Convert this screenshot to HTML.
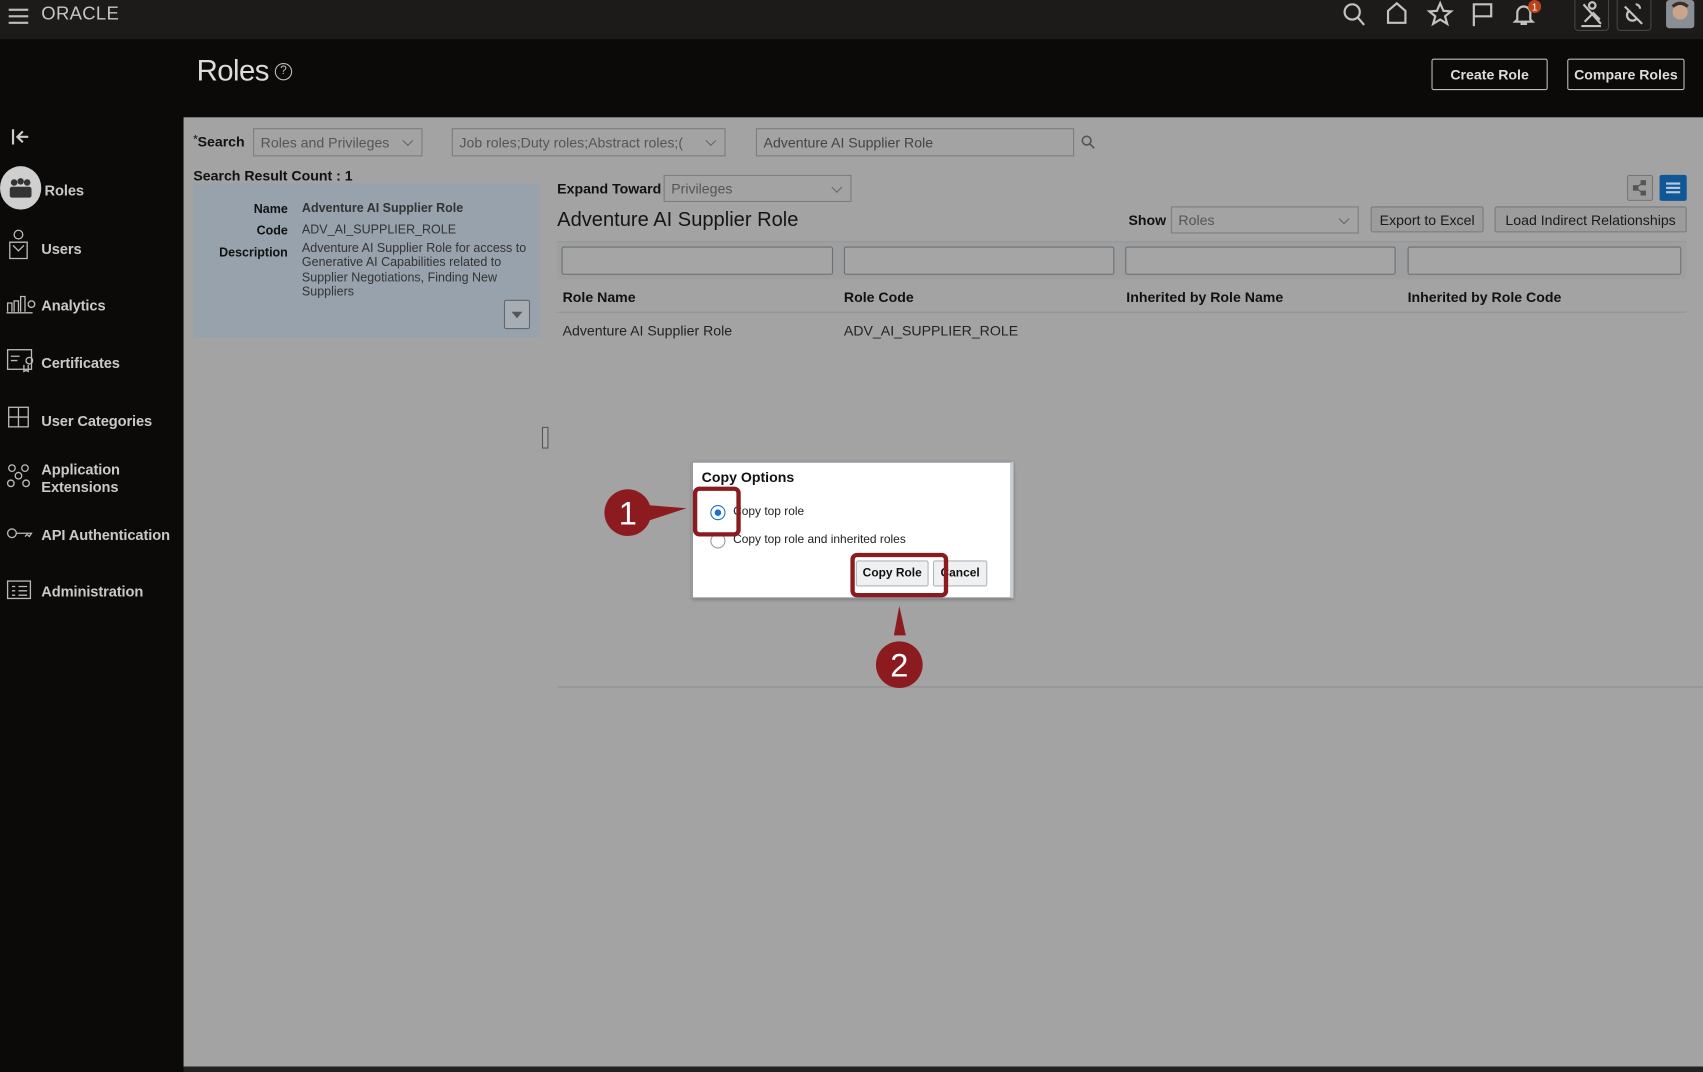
<!DOCTYPE html>
<html><head><meta charset="utf-8"><style>
*{margin:0;padding:0;box-sizing:border-box}
html,body{width:1703px;height:1072px;overflow:hidden;background:#0b0a08;font-family:"Liberation Sans",sans-serif}
#w{position:absolute;left:0;top:0;width:1568px;height:987px;transform:scale(1.0861);transform-origin:0 0;background:#0b0a08}
.a{position:absolute}
.t{position:absolute;white-space:nowrap}
.nav{color:#c9c9c9;font-size:13.5px;font-weight:bold;letter-spacing:-0.1px}
.sel{position:absolute;border:1px solid #7d7d7d;background:#a3a3a3;color:#555;font-size:13px;padding:0 6px;display:flex;align-items:center}
.dd:after{content:"";position:absolute;right:9px;top:50%;width:6px;height:6px;border-right:1px solid #666;border-bottom:1px solid #666;transform:translateY(-70%) rotate(45deg)}
.btn{position:absolute;border:1px solid #7a7a7a;border-radius:2px;background:#9c9c9c;color:#1a1a1a;font-size:13px;display:flex;align-items:center;justify-content:center}
.inp{position:absolute;border:1px solid #6f6f6f;border-radius:2px;background:#a5a5a5}
.th{position:absolute;font-size:13px;font-weight:bold;color:#111}
</style></head><body><div id="w">
<div class="a" style="left:0;top:0;width:1568px;height:36px;background:#1d1b1a"></div>
<div class="a" style="left:8px;top:8px;width:18px;height:2px;background:#bbb;box-shadow:0 6px 0 #bbb,0 12px 0 #bbb"></div>
<div class="t" style="left:38px;top:3px;color:#c4c4c4;font-size:17px;font-weight:normal;letter-spacing:0.3px">ORACLE</div>
<svg class="a" style="left:1230px;top:0" width="338" height="36" viewBox="0 0 338 36" fill="none" stroke="#c2c2c2" stroke-width="2">
<circle cx="15" cy="11" r="7"/><path d="M20 16l6 7"/>
<path d="M48 21V10l8-7 8 7v11z"/>
<path d="M96 3l3 7 7 .5-5.5 4.5 2 7-6.5-4-6.5 4 2-7L86 10.5l7-.5z"/>
<path d="M127 24V4h16v11h-16"/>
<path d="M167 18v-6a6 6 0 0112 0v6l2 2h-16z M170 22h6"/>
<circle cx="183" cy="6" r="6" fill="#b8431c" stroke="none"/>
<text x="183" y="9.5" fill="#fff" stroke="none" font-size="9" text-anchor="middle" font-family="Liberation Sans">1</text>
<rect x="220" y="-2" width="31" height="30" rx="3" stroke="#444" stroke-width="1"/>
<path d="M226 24h18 M229 20l8-8 6 6 M233 5a3 3 0 110 .1 M228 4l16 18"/>
<rect x="259" y="-2" width="31" height="30" rx="3" stroke="#444" stroke-width="1"/>
<path d="M266 6l16 16 M270 10a5 5 0 107 7 M276 4a4 4 0 014 4"/>
<rect x="304" y="0" width="26" height="26" rx="3" fill="#8a8f96" stroke="none"/>
<circle cx="317" cy="11" r="7" fill="#c9a58c" stroke="none"/><path d="M310 6q7-6 14 0" stroke="#3a2e28" stroke-width="3"/>
</svg>
<div class="t" style="left:181px;top:50px;color:#dcdcdc;font-size:27px;letter-spacing:-0.5px">Roles</div>
<div class="a" style="left:253px;top:58px;width:16px;height:16px;border:1.5px solid #bbb;border-radius:50%;color:#bbb;font-size:11px;text-align:center;line-height:13px">?</div>
<div class="a" style="left:1318px;top:54px;width:107px;height:29px;border:1px solid #bbb;border-radius:2px;color:#ddd;font-size:13px;font-weight:bold;text-align:center;line-height:27px">Create Role</div>
<div class="a" style="left:1443px;top:54px;width:108px;height:29px;border:1px solid #bbb;border-radius:2px;color:#ddd;font-size:13px;font-weight:bold;text-align:center;line-height:27px">Compare Roles</div>
<svg class="a" style="left:10px;top:117px" width="20" height="18" fill="none" stroke="#ccc" stroke-width="2"><path d="M2 2v14 M16 9H7 M11 4L6 9l5 5"/></svg>
<div class="a" style="left:0;top:153px;width:38px;height:40px;border-radius:50%;background:#cfcfcf"></div>
<svg class="a" style="left:7px;top:163px" width="24" height="20" fill="#333"><circle cx="6" cy="5" r="3"/><circle cx="12" cy="4" r="3"/><circle cx="18" cy="5" r="3"/><rect x="2" y="9" width="20" height="10" rx="2"/></svg>
<div class="t nav" style="left:41px;top:168px">Roles</div>
<svg class="a" style="left:0;top:210px" width="36" height="370" fill="none" stroke="#bbb" stroke-width="1.2">
<circle cx="17" cy="6" r="4"/><path d="M9 28V13h16v15z M12 16l5 5 5-5"/>
<path d="M6 78h24 M7 77v-8h4v8 M13 77v-10h4v10 M19 77v-14h4v14 M26 70a3 3 0 110 .1"/>
<rect x="7" y="112" width="22" height="18"/><path d="M10 118h8 M10 122h6 M24 122a3 3 0 110 .1 M22 126v6l2-1 2 1v-6"/>
<rect x="8" y="165" width="18" height="18"/><path d="M17 165v18 M8 174h18"/>
<circle cx="11" cy="221" r="3"/><circle cx="23" cy="221" r="3"/><circle cx="17" cy="228" r="3"/><circle cx="10" cy="235" r="3"/><circle cx="24" cy="235" r="3"/>
<circle cx="11" cy="281" r="4"/><path d="M15 281h14l-2 3-2-2-2 2"/>
<rect x="7" y="325" width="21" height="16"/><path d="M11 330h3 M11 334h3 M11 338h3 M17 330h8 M17 334h8 M17 338h8"/>
</svg>
<div class="t nav" style="left:38px;top:222px">Users</div>
<div class="t nav" style="left:38px;top:274px">Analytics</div>
<div class="t nav" style="left:38px;top:327px">Certificates</div>
<div class="t nav" style="left:38px;top:380px">User Categories</div>
<div class="t nav" style="left:38px;top:425px;line-height:16px">Application<br>Extensions</div>
<div class="t nav" style="left:38px;top:485px">API Authentication</div>
<div class="t nav" style="left:38px;top:537px">Administration</div>
<div class="a" style="left:169px;top:108px;width:1399px;height:874px;background:#a3a3a3"></div>
<div class="a" style="left:169px;top:982px;width:1399px;height:5px;background:#222"></div>
<div class="t" style="left:178px;top:123px;font-size:13px;font-weight:bold;color:#111"><span style="color:#234;font-size:10px;vertical-align:top">*</span>Search</div>
<div class="sel dd" style="left:233px;top:118px;width:156px;height:26px">Roles and Privileges</div>
<div class="sel dd" style="left:416px;top:118px;width:252px;height:26px">Job roles;Duty roles;Abstract roles;(</div>
<div class="sel" style="left:696px;top:118px;width:293px;height:26px;color:#444">Adventure AI Supplier Role</div>
<svg class="a" style="left:995px;top:124px" width="14" height="14" fill="none" stroke="#555" stroke-width="1.5"><circle cx="5.5" cy="5.5" r="4"/><path d="M8.5 8.5l4 4"/></svg>
<div class="t" style="left:178px;top:154px;font-size:13px;font-weight:bold;color:#111">Search Result Count : 1</div>
<div class="a" style="left:178px;top:169px;width:319px;height:142px;background:#97a2ad"></div>
<div class="t" style="left:178px;top:183px;width:87px;text-align:right;font-size:11.5px;font-weight:bold;color:#111;line-height:20px">Name<br>Code<br>Description</div>
<div class="t" style="left:278px;top:186px;font-size:11.5px;font-weight:bold;color:#333">Adventure AI Supplier Role</div>
<div class="t" style="left:278px;top:206px;font-size:11.5px;color:#333">ADV_AI_SUPPLIER_ROLE</div>
<div class="t" style="left:278px;top:223px;font-size:11.5px;color:#333;line-height:13.3px;white-space:normal;width:215px">Adventure AI Supplier Role for access to Generative AI Capabilities related to Supplier Negotiations, Finding New Suppliers</div>
<div class="a" style="left:464px;top:276px;width:24px;height:27px;border:1px solid #666;border-radius:2px;background:#a6adb4"></div>
<div class="a" style="left:471px;top:287px;border-left:5px solid transparent;border-right:5px solid transparent;border-top:6px solid #555"></div>
<div class="a" style="left:499px;top:393px;width:6px;height:20px;border:1px solid #555;background:#aaa"></div>
<div class="t" style="left:513px;top:166px;font-size:13px;font-weight:bold;color:#111">Expand Toward</div>
<div class="sel dd" style="left:611px;top:161px;width:173px;height:25px">Privileges</div>
<div class="t" style="left:513px;top:191px;font-size:18.5px;color:#151515">Adventure AI Supplier Role</div>
<div class="t" style="left:1039px;top:195px;font-size:13px;font-weight:bold;color:#111">Show</div>
<div class="sel dd" style="left:1078px;top:190px;width:173px;height:25px">Roles</div>
<div class="btn" style="left:1262px;top:190px;width:104px;height:24px">Export to Excel</div>
<div class="btn" style="left:1376px;top:190px;width:177px;height:24px">Load Indirect Relationships</div>
<div class="a" style="left:1498px;top:161px;width:24px;height:24px;border:1px solid #777;border-radius:2px;background:#9c9c9c"></div>
<svg class="a" style="left:1503px;top:166px" width="14" height="14" fill="#555" stroke="#555"><rect x="1" y="5" width="4" height="4"/><rect x="8" y="0" width="4" height="4"/><rect x="8" y="10" width="4" height="4"/><path d="M3 7l7-5 M3 7l7 5" fill="none"/></svg>
<div class="a" style="left:1528px;top:161px;width:25px;height:24px;border-radius:2px;background:#0f5796"></div>
<div class="a" style="left:1534px;top:168px;width:13px;height:2px;background:#b8c8d8;box-shadow:0 4px 0 #b8c8d8,0 8px 0 #b8c8d8"></div>
<div class="a" style="left:513px;top:222px;width:1040px;height:35px;background:#9d9fa1;border-top:1px solid #959799"></div>
<div class="inp" style="left:517px;top:227px;width:250px;height:26px"></div>
<div class="inp" style="left:777px;top:227px;width:249px;height:26px"></div>
<div class="inp" style="left:1036px;top:227px;width:249px;height:26px"></div>
<div class="inp" style="left:1296px;top:227px;width:252px;height:26px"></div>
<div class="th" style="left:518px;top:266px">Role Name</div>
<div class="th" style="left:777px;top:266px">Role Code</div>
<div class="th" style="left:1037px;top:266px">Inherited by Role Name</div>
<div class="th" style="left:1296px;top:266px">Inherited by Role Code</div>
<div class="a" style="left:513px;top:287px;width:1040px;height:1px;background:#949494"></div>
<div class="t" style="left:518px;top:297px;font-size:13px;color:#222">Adventure AI Supplier Role</div>
<div class="t" style="left:777px;top:297px;font-size:13px;color:#222">ADV_AI_SUPPLIER_ROLE</div>
<div class="a" style="left:513px;top:632px;width:1055px;height:1px;background:#8e8e8e"></div>
<div class="a" style="left:637px;top:425px;width:296px;height:126px;background:#fff;border:1px solid #8a9099;border-right:3px solid #c8ccd2;box-shadow:0 1px 3px rgba(0,0,0,.3)"></div>
<div class="t" style="left:646px;top:432px;font-size:13px;font-weight:bold;color:#111">Copy Options</div>
<div class="a" style="left:654px;top:465px;width:14px;height:14px;border-radius:50%;border:1.5px solid #1a6fd0"></div>
<div class="a" style="left:658px;top:469px;width:6px;height:6px;border-radius:50%;background:#1a6fd0"></div>
<div class="t" style="left:675px;top:465px;font-size:11px;color:#222">Copy top role</div>
<div class="a" style="left:654px;top:491px;width:14px;height:14px;border-radius:50%;border:1px solid #999"></div>
<div class="t" style="left:675px;top:491px;font-size:11px;color:#222">Copy top role and inherited roles</div>
<div class="a" style="left:788px;top:516px;width:67px;height:24px;border:1px solid #b0b6be;border-radius:2px;background:#eef0f2;font-size:11px;font-weight:bold;text-align:center;line-height:22px;color:#111">Copy Role</div>
<div class="a" style="left:859px;top:516px;width:50px;height:24px;border:1px solid #b0b6be;border-radius:2px;background:#eef0f2;font-size:11px;font-weight:bold;text-align:center;line-height:22px;color:#111">Cancel</div>
<svg class="a" style="left:0;top:0" width="1568" height="987">
<g fill="#8c1b20" stroke="none">
<path d="M595 465L632 468L595 480z"/>
<circle cx="578" cy="472" r="21.5"/>
<path d="M823 585L828 558L834 585z"/>
<circle cx="828" cy="612" r="21.5"/>
</g>
<text x="578" y="483" fill="#fff" font-size="30" text-anchor="middle" font-family="Liberation Sans">1</text>
<text x="828" y="623" fill="#fff" font-size="30" text-anchor="middle" font-family="Liberation Sans">2</text>
<g fill="none" stroke="#8c1b20" stroke-width="4">
<rect x="640" y="450" width="40" height="42" rx="4"/>
<rect x="785" y="511" width="86" height="37" rx="4"/>
</g>
</svg>
</div></body></html>
